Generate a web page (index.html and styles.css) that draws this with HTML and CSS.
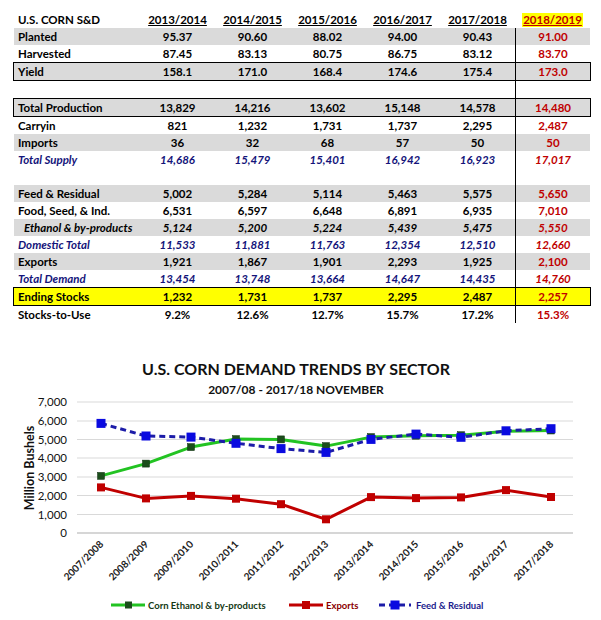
FILE: index.html
```html
<!DOCTYPE html>
<html>
<head>
<meta charset="utf-8">
<link rel="stylesheet" href="styles.css">
</head>
<body>
<div class="sd">
  <div class="row head">
    <div class="lbl">U.S. CORN S&amp;D</div>
    <div class="c"><u>2013/2014</u></div>
    <div class="c"><u>2014/2015</u></div>
    <div class="c"><u>2015/2016</u></div>
    <div class="c"><u>2016/2017</u></div>
    <div class="c"><u>2017/2018</u></div>
    <div class="c last"><span class="hl">2018/2019</span></div>
  </div>
  <div class="row gray"><div class="lbl">Planted</div><div class="c">95.37</div><div class="c">90.60</div><div class="c">88.02</div><div class="c">94.00</div><div class="c">90.43</div><div class="c last">91.00</div></div>
  <div class="row"><div class="lbl">Harvested</div><div class="c">87.45</div><div class="c">83.13</div><div class="c">80.75</div><div class="c">86.75</div><div class="c">83.12</div><div class="c last">83.70</div></div>
  <div class="row gray boxed"><div class="lbl">Yield</div><div class="c">158.1</div><div class="c">171.0</div><div class="c">168.4</div><div class="c">174.6</div><div class="c">175.4</div><div class="c last">173.0</div></div>
  <div class="row"><div class="lbl"></div><div class="c"></div><div class="c"></div><div class="c"></div><div class="c"></div><div class="c"></div><div class="c last"></div></div>
  <div class="row gray boxed"><div class="lbl">Total Production</div><div class="c">13,829</div><div class="c">14,216</div><div class="c">13,602</div><div class="c">15,148</div><div class="c">14,578</div><div class="c last">14,480</div></div>
  <div class="row"><div class="lbl">Carryin</div><div class="c">821</div><div class="c">1,232</div><div class="c">1,731</div><div class="c">1,737</div><div class="c">2,295</div><div class="c last">2,487</div></div>
  <div class="row gray"><div class="lbl">Imports</div><div class="c">36</div><div class="c">32</div><div class="c">68</div><div class="c">57</div><div class="c">50</div><div class="c last">50</div></div>
  <div class="row total"><div class="lbl">Total Supply</div><div class="c">14,686</div><div class="c">15,479</div><div class="c">15,401</div><div class="c">16,942</div><div class="c">16,923</div><div class="c last">17,017</div></div>
  <div class="row"><div class="lbl"></div><div class="c"></div><div class="c"></div><div class="c"></div><div class="c"></div><div class="c"></div><div class="c last"></div></div>
  <div class="row gray"><div class="lbl">Feed &amp; Residual</div><div class="c">5,002</div><div class="c">5,284</div><div class="c">5,114</div><div class="c">5,463</div><div class="c">5,575</div><div class="c last">5,650</div></div>
  <div class="row"><div class="lbl">Food, Seed, &amp; Ind.</div><div class="c">6,531</div><div class="c">6,597</div><div class="c">6,648</div><div class="c">6,891</div><div class="c">6,935</div><div class="c last">7,010</div></div>
  <div class="row gray sub"><div class="lbl">Ethanol &amp; by-products</div><div class="c">5,124</div><div class="c">5,200</div><div class="c">5,224</div><div class="c">5,439</div><div class="c">5,475</div><div class="c last">5,550</div></div>
  <div class="row total"><div class="lbl">Domestic Total</div><div class="c">11,533</div><div class="c">11,881</div><div class="c">11,763</div><div class="c">12,354</div><div class="c">12,510</div><div class="c last">12,660</div></div>
  <div class="row gray"><div class="lbl">Exports</div><div class="c">1,921</div><div class="c">1,867</div><div class="c">1,901</div><div class="c">2,293</div><div class="c">1,925</div><div class="c last">2,100</div></div>
  <div class="row total"><div class="lbl">Total Demand</div><div class="c">13,454</div><div class="c">13,748</div><div class="c">13,664</div><div class="c">14,647</div><div class="c">14,435</div><div class="c last">14,760</div></div>
  <div class="row yellow boxed"><div class="lbl">Ending Stocks</div><div class="c">1,232</div><div class="c">1,731</div><div class="c">1,737</div><div class="c">2,295</div><div class="c">2,487</div><div class="c last">2,257</div></div>
  <div class="row"><div class="lbl">Stocks-to-Use</div><div class="c">9.2%</div><div class="c">12.6%</div><div class="c">12.7%</div><div class="c">15.7%</div><div class="c">17.2%</div><div class="c last">15.3%</div></div>
</div>

<svg class="chart" width="601" height="297" viewBox="0 323 601 297" xmlns="http://www.w3.org/2000/svg">
  <text class="title" x="296" y="375" text-anchor="middle">U.S. CORN DEMAND TRENDS BY SECTOR</text>
  <text class="subtitle" x="296" y="394" text-anchor="middle">2007/08 - 2017/18 NOVEMBER</text>

  <g stroke="#d9d9d9" stroke-width="1">
    <line x1="77" y1="402" x2="573" y2="402"/>
    <line x1="77" y1="421" x2="573" y2="421"/>
    <line x1="77" y1="439.5" x2="573" y2="439.5"/>
    <line x1="77" y1="458" x2="573" y2="458"/>
    <line x1="77" y1="477" x2="573" y2="477"/>
    <line x1="77" y1="495.5" x2="573" y2="495.5"/>
    <line x1="77" y1="514.5" x2="573" y2="514.5"/>
  </g>
  <line x1="77" y1="533" x2="573" y2="533" stroke="#c8c8c8" stroke-width="1.5"/>

  <g class="ylab" text-anchor="end">
    <text x="67" y="406">7,000</text>
    <text x="67" y="425">6,000</text>
    <text x="67" y="443.5">5,000</text>
    <text x="67" y="462">4,000</text>
    <text x="67" y="481">3,000</text>
    <text x="67" y="499.5">2,000</text>
    <text x="67" y="518.5">1,000</text>
    <text x="67" y="537">0</text>
  </g>
  <text class="ytitle" transform="translate(34 468) rotate(-90)" text-anchor="middle">Million Bushels</text>

  <g class="xlab" text-anchor="end">
    <text transform="translate(104 545) rotate(-45)">2007/2008</text>
    <text transform="translate(149 545) rotate(-45)">2008/2009</text>
    <text transform="translate(194 545) rotate(-45)">2009/2010</text>
    <text transform="translate(239 545) rotate(-45)">2010/2011</text>
    <text transform="translate(284 545) rotate(-45)">2011/2012</text>
    <text transform="translate(329 545) rotate(-45)">2012/2013</text>
    <text transform="translate(374 545) rotate(-45)">2013/2014</text>
    <text transform="translate(419 545) rotate(-45)">2014/2015</text>
    <text transform="translate(464 545) rotate(-45)">2015/2016</text>
    <text transform="translate(509 545) rotate(-45)">2016/2017</text>
    <text transform="translate(554 545) rotate(-45)">2017/2018</text>
  </g>

  <polyline fill="none" stroke="#22c322" stroke-width="3" stroke-linejoin="round"
    points="101,475.9 146,463.6 191,447.1 236,439.1 281,439.4 326,446.1 371,437.1 416,435.7 461,435.2 506,431.2 551,430.5"/>
  <g fill="#1b4d1b" stroke="#0e2e0e" stroke-width="0.5">
    <rect x="97.5" y="472.4" width="7" height="7"/>
    <rect x="142.5" y="460.1" width="7" height="7"/>
    <rect x="187.5" y="443.6" width="7" height="7"/>
    <rect x="232.5" y="435.6" width="7" height="7"/>
    <rect x="277.5" y="435.9" width="7" height="7"/>
    <rect x="322.5" y="442.6" width="7" height="7"/>
    <rect x="367.5" y="433.6" width="7" height="7"/>
    <rect x="412.5" y="432.2" width="7" height="7"/>
    <rect x="457.5" y="431.7" width="7" height="7"/>
    <rect x="502.5" y="427.7" width="7" height="7"/>
    <rect x="547.5" y="427" width="7" height="7"/>
  </g>

  <polyline fill="none" stroke="#c00000" stroke-width="3" stroke-linejoin="round"
    points="101,487.4 146,498.4 191,495.9 236,498.7 281,504.2 326,519.3 371,497.1 416,498.1 461,497.4 506,490.1 551,497"/>
  <g fill="#c00000">
    <rect x="97" y="483.4" width="8" height="8"/>
    <rect x="142" y="494.4" width="8" height="8"/>
    <rect x="187" y="491.9" width="8" height="8"/>
    <rect x="232" y="494.7" width="8" height="8"/>
    <rect x="277" y="500.2" width="8" height="8"/>
    <rect x="322" y="515.3" width="8" height="8"/>
    <rect x="367" y="493.1" width="8" height="8"/>
    <rect x="412" y="494.1" width="8" height="8"/>
    <rect x="457" y="493.4" width="8" height="8"/>
    <rect x="502" y="486.1" width="8" height="8"/>
    <rect x="547" y="493" width="8" height="8"/>
  </g>

  <polyline fill="none" stroke="#1c1ca8" stroke-width="3" stroke-dasharray="6 4"
    points="101,423.4 146,436 191,437.1 236,443.3 281,448.6 326,452.4 371,439.4 416,434.1 461,437.3 506,430.8 551,428.7"/>
  <g fill="#0a0ae0">
    <rect x="96.5" y="418.9" width="9" height="9"/>
    <rect x="141.5" y="431.5" width="9" height="9"/>
    <rect x="186.5" y="432.6" width="9" height="9"/>
    <rect x="231.5" y="438.8" width="9" height="9"/>
    <rect x="276.5" y="444.1" width="9" height="9"/>
    <rect x="321.5" y="447.9" width="9" height="9"/>
    <rect x="366.5" y="434.9" width="9" height="9"/>
    <rect x="411.5" y="429.6" width="9" height="9"/>
    <rect x="456.5" y="432.8" width="9" height="9"/>
    <rect x="501.5" y="426.3" width="9" height="9"/>
    <rect x="546.5" y="424.2" width="9" height="9"/>
  </g>

  <g class="legend">
    <line x1="111" y1="605" x2="145" y2="605" stroke="#22c322" stroke-width="3"/>
    <rect x="125" y="601.5" width="7" height="7" fill="#1b4d1b"/>
    <text x="148" y="609" fill="#143814">Corn Ethanol &amp; by-products</text>

    <line x1="289" y1="605" x2="323" y2="605" stroke="#c00000" stroke-width="3"/>
    <rect x="302" y="601" width="8" height="8" fill="#c00000"/>
    <text x="326" y="609" fill="#8b0000">Exports</text>

    <line x1="379" y1="605" x2="411" y2="605" stroke="#1c1ca8" stroke-width="3" stroke-dasharray="6 4"/>
    <rect x="390.5" y="600.5" width="9" height="9" fill="#0a0ae0"/>
    <text x="416" y="609" fill="#1a1a8c">Feed &amp; Residual</text>
  </g>
</svg>
</body>
</html>
```

FILE: styles.css
```css
html, body {
  margin: 0;
  padding: 0;
  background: #ffffff;
}

body {
  width: 601px;
  height: 620px;
  overflow: hidden;
  font-family: Lato, "Liberation Sans", sans-serif;
}

.sd {
  padding-top: 12px;
  margin-left: 14px;
  width: 576px;
}

.row {
  display: grid;
  grid-template-columns: 126px repeat(6, 75px);
  height: 17px;
  align-items: stretch;
  font-size: 11.5px;
  font-weight: 700;
  color: #000;
  box-sizing: border-box;
}

.row > div {
  display: flex;
  align-items: center;
  line-height: 1;
}

.row .lbl {
  padding-left: 4px;
}

.row .c {
  justify-content: center;
}

.row .last {
  border-left: 1px solid #000;
  color: #c00000;
}

.row.head {
  height: 16px;
}

.row.head .last {
  border-left: none;
}

.row.head u {
  text-decoration-thickness: 1px;
  text-underline-offset: 1px;
}

.hl {
  background: #ffff00;
  color: #c00000;
  text-decoration: underline;
  text-decoration-thickness: 1px;
  text-underline-offset: 1px;
  padding: 1px 1px 2px;
}

.gray {
  background: #dadada;
}

.yellow {
  background: #ffff00;
}

.boxed {
  height: 19px;
  border: 1px solid #000;
  margin-left: -1px;
  width: 578px;
  grid-template-columns: 126px repeat(6, 75px);
}

.total {
  color: #14147a;
  font-style: italic;
}

.total .last {
  color: #c00000;
}

.sub .lbl {
  padding-left: 10px;
  font-style: italic;
}

.sub .c {
  font-style: italic;
}

.chart {
  display: block;
}

.chart text {
  font-family: Lato, "Liberation Sans", sans-serif;
}

.title {
  font-size: 16px;
  font-weight: 700;
  fill: #111;
}

.subtitle {
  font-size: 12px;
  font-weight: 700;
  fill: #111;
}

.ylab text {
  font-size: 11.5px;
  fill: #111;
}

.ytitle {
  font-size: 12.5px;
  font-weight: 700;
  fill: #111;
}

.xlab text {
  font-size: 10px;
  font-weight: 700;
  fill: #1a1a1a;
}

.legend text {
  font-size: 9.5px;
  font-weight: 700;
}
```
